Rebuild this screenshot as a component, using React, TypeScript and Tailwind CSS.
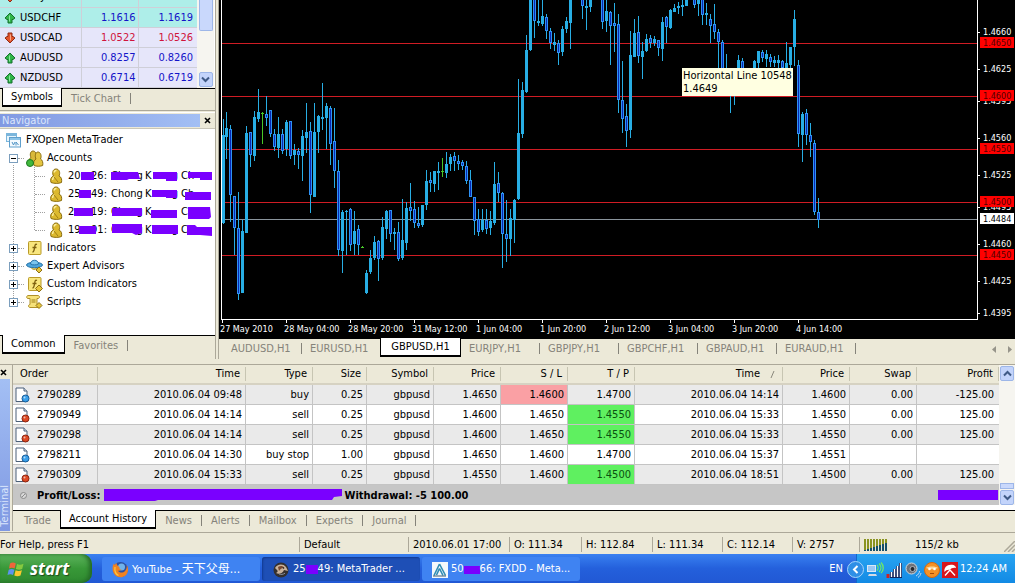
import { Fragment } from "react";
import type { ReactNode } from "react";

type Candle = [number, number, number, number, number, "u" | "d" | "g"];

// x, high, body top, body bottom, low, direction
const candles: Candle[] = [
  [223, 119, 135, 223, 224, "u"], [226, 112, 128, 137, 159, "u"], [230, 125, 129, 195, 222, "d"],
  [234, 196, 196, 228, 255, "d"], [238, 192, 228, 294, 300, "d"], [242, 220, 231, 293, 293, "u"],
  [246, 126, 133, 233, 233, "u"], [250, 132, 132, 155, 167, "d"], [254, 111, 117, 156, 161, "u"],
  [258, 89, 112, 119, 122, "u"], [262, 112, 113, 114, 144, "g"], [266, 96, 114, 118, 126, "d"],
  [270, 110, 110, 134, 137, "d"], [274, 129, 134, 147, 151, "d"], [278, 117, 134, 148, 158, "u"],
  [282, 129, 134, 151, 154, "d"], [286, 120, 122, 149, 156, "u"], [290, 121, 121, 156, 159, "d"],
  [294, 144, 150, 155, 165, "u"], [298, 148, 151, 155, 169, "d"], [302, 130, 136, 156, 181, "u"],
  [306, 103, 132, 138, 153, "u"], [310, 122, 131, 195, 213, "d"], [314, 103, 132, 197, 197, "u"],
  [318, 115, 116, 132, 153, "u"], [322, 83, 117, 119, 130, "u"], [326, 103, 106, 118, 149, "u"],
  [330, 106, 108, 144, 165, "d"], [334, 108, 141, 171, 188, "d"], [338, 160, 171, 250, 256, "d"],
  [342, 210, 212, 251, 273, "u"], [346, 210, 211, 212, 255, "u"], [350, 208, 209, 245, 251, "d"],
  [354, 211, 231, 244, 255, "u"], [358, 225, 229, 245, 255, "d"], [366, 270, 273, 293, 294, "u"],
  [370, 250, 258, 272, 274, "u"], [374, 236, 242, 258, 260, "u"], [378, 240, 241, 259, 281, "d"],
  [382, 217, 227, 258, 260, "u"], [386, 210, 211, 229, 239, "u"], [390, 210, 210, 234, 242, "d"],
  [394, 228, 232, 234, 250, "u"], [398, 222, 232, 259, 261, "d"], [402, 199, 240, 258, 260, "u"],
  [406, 202, 208, 243, 250, "u"], [410, 183, 207, 211, 221, "d"], [414, 201, 209, 223, 228, "d"],
  [418, 207, 223, 226, 228, "d"], [422, 205, 205, 225, 227, "u"], [426, 170, 181, 205, 210, "u"],
  [430, 172, 180, 183, 192, "d"], [434, 171, 171, 184, 192, "u"], [438, 162, 171, 173, 190, "u"],
  [442, 158, 171, 172, 177, "g"], [446, 152, 164, 173, 178, "u"], [450, 154, 157, 164, 171, "u"],
  [454, 152, 156, 161, 171, "d"], [458, 155, 161, 164, 170, "d"], [462, 160, 162, 166, 170, "d"],
  [466, 161, 166, 181, 184, "d"], [470, 170, 180, 197, 197, "d"], [474, 197, 197, 221, 235, "d"],
  [478, 209, 219, 232, 236, "d"], [482, 209, 220, 230, 232, "u"], [486, 209, 220, 229, 234, "d"],
  [490, 211, 221, 228, 235, "u"], [494, 162, 184, 223, 225, "u"], [498, 172, 183, 193, 202, "d"],
  [502, 192, 193, 234, 268, "d"], [506, 200, 234, 239, 262, "d"], [510, 209, 218, 239, 256, "u"],
  [514, 199, 200, 220, 243, "u"], [518, 79, 133, 199, 200, "u"], [522, 82, 90, 134, 138, "u"],
  [526, 35, 50, 92, 93, "u"], [530, -2, -2, 50, 51, "u"], [534, -2, -2, 21, 38, "d"],
  [538, -2, 21, 23, 26, "u"], [542, -2, 16, 24, 26, "u"], [546, 14, 17, 31, 39, "d"],
  [550, 28, 31, 43, 49, "d"], [554, 33, 42, 45, 51, "u"], [558, 40, 43, 53, 65, "d"],
  [562, 26, 29, 52, 56, "u"], [566, 17, 21, 29, 33, "u"], [570, -2, -2, 23, 49, "u"],
  [582, -2, -2, 6, 19, "d"], [586, -2, 6, 8, 30, "u"], [590, -2, -2, 7, 12, "u"],
  [602, -2, -2, 22, 29, "d"], [606, -2, 11, 21, 32, "u"], [610, 11, 12, 26, 65, "d"],
  [614, 3, 23, 26, 52, "d"], [618, 14, 24, 100, 113, "d"], [622, 61, 100, 119, 133, "d"],
  [626, 104, 116, 131, 147, "d"], [630, 31, 55, 130, 138, "u"], [634, 19, 33, 57, 57, "u"],
  [638, 16, 32, 56, 63, "d"], [642, 42, 51, 57, 79, "u"], [646, 34, 39, 51, 52, "u"],
  [650, 35, 38, 43, 48, "d"], [654, 36, 39, 43, 46, "u"], [658, 40, 40, 48, 56, "d"],
  [662, 17, 22, 49, 61, "u"], [666, 16, 17, 27, 43, "d"], [670, 9, 10, 28, 29, "u"],
  [674, 4, 8, 12, 12, "u"], [678, 2, 6, 8, 14, "u"], [682, -2, 5, 7, 16, "u"],
  [686, -2, -2, 6, 6, "u"], [694, -2, -2, 5, 8, "d"], [698, -2, -2, 4, 16, "u"],
  [702, -2, -2, 15, 25, "d"], [706, 3, 13, 15, 25, "u"], [710, 14, 19, 26, 43, "d"],
  [714, 4, 24, 32, 39, "d"], [718, 29, 32, 42, 77, "d"], [722, 40, 42, 80, 90, "d"],
  [726, 54, 80, 90, 95, "d"], [730, 80, 85, 92, 113, "d"], [734, 80, 85, 92, 105, "u"],
  [738, 55, 60, 72, 76, "u"], [742, 58, 61, 72, 76, "d"], [754, 60, 61, 72, 76, "u"],
  [758, 51, 51, 63, 68, "u"], [762, 50, 52, 58, 62, "d"], [766, 50, 54, 59, 67, "u"],
  [770, 54, 57, 62, 67, "d"], [774, 56, 60, 63, 67, "u"], [778, 55, 60, 63, 70, "u"],
  [782, 60, 61, 68, 72, "d"], [786, 42, 63, 70, 74, "u"], [790, 47, 47, 65, 82, "u"],
  [794, 10, 19, 47, 66, "u"], [798, 60, 65, 134, 147, "d"], [802, 112, 114, 135, 162, "u"],
  [806, 109, 113, 135, 145, "d"], [810, 123, 135, 142, 157, "d"], [814, 140, 143, 212, 215, "d"],
  [818, 198, 212, 220, 228, "d"],
];

const levels = [
  { y: 43, price: "1.4650" },
  { y: 96, price: "1.4600" },
  { y: 149, price: "1.4550" },
  { y: 202, price: "1.4500" },
  { y: 255, price: "1.4450" },
];

const scale = [
  { y: 32, price: "1.4660" },
  { y: 69, price: "1.4625" },
  { y: 101, price: "1.4595" },
  { y: 138, price: "1.4560" },
  { y: 175, price: "1.4525" },
  { y: 207, price: "1.4495" },
  { y: 244, price: "1.4460" },
  { y: 281, price: "1.4425" },
  { y: 313, price: "1.4395" },
];

const times = [
  "27 May 2010", "28 May 04:00", "28 May 20:00", "31 May 12:00", "1 Jun 04:00",
  "1 Jun 20:00", "2 Jun 12:00", "3 Jun 04:00", "3 Jun 20:00", "4 Jun 14:00",
];

const quotes = [
  { symbol: "USDJPY", bid: "91.79", ask: "91.83", up: false, hot: true },
  { symbol: "USDCHF", bid: "1.1616", ask: "1.1619", up: true, hot: true },
  { symbol: "USDCAD", bid: "1.0522", ask: "1.0526", up: false, hot: false },
  { symbol: "AUDUSD", bid: "0.8257", ask: "0.8260", up: true, hot: false },
  { symbol: "NZDUSD", bid: "0.6714", ask: "0.6719", up: true, hot: false },
];

const accounts = [
  { head: "20", tail: "26:", rest: "g" },
  { head: "25", tail: "49:", rest: "g" },
  { head: "2", tail: "19:", rest: "" },
  { head: "19", tail: "91:", rest: "g" },
];

const orders = [
  { id: "2790289", open: "2010.06.04 09:48", type: "buy", size: "0.25", price: "1.4650", sl: "1.4600", tp: "1.4700", close: "2010.06.04 14:14", exit: "1.4600", swap: "0.00", profit: "-125.00", hit: "sl" },
  { id: "2790949", open: "2010.06.04 14:14", type: "sell", size: "0.25", price: "1.4600", sl: "1.4650", tp: "1.4550", close: "2010.06.04 15:33", exit: "1.4550", swap: "0.00", profit: "125.00", hit: "tp" },
  { id: "2790298", open: "2010.06.04 14:14", type: "sell", size: "0.25", price: "1.4600", sl: "1.4650", tp: "1.4550", close: "2010.06.04 15:33", exit: "1.4550", swap: "0.00", profit: "125.00", hit: "tp" },
  { id: "2798211", open: "2010.06.04 14:30", type: "buy stop", size: "1.00", price: "1.4650", sl: "1.4600", tp: "1.4700", close: "2010.06.04 15:37", exit: "1.4551", swap: "", profit: "", hit: "" },
  { id: "2790309", open: "2010.06.04 15:33", type: "sell", size: "0.25", price: "1.4550", sl: "1.4600", tp: "1.4500", close: "2010.06.04 18:51", exit: "1.4500", swap: "0.00", profit: "125.00", hit: "tp" },
];

const headings = ["Order", "Time", "Type", "Size", "Symbol", "Price", "S / L", "T / P", "Time", "Price", "Swap", "Profit"];

/* ---------- icons ---------- */

function QuoteArrow({ up }: { up: boolean }) {
  return (
    <svg width="12" height="12" viewBox="0 0 12 12" className={up ? "" : "rotate-180"}>
      <path
        d="M6 1l5 5-2 1.500H8V11H4V7.500H3L1 6z"
        fill={up ? "#2fb54a" : "#e2552c"}
        stroke={up ? "#14702c" : "#8f2a14"}
      />
      <path d="M5.500 3.500v6" stroke={up ? "#8fe8a0" : "#f7a98a"} />
    </svg>
  );
}

function PersonIcon() {
  return (
    <svg width="14" height="16" viewBox="0 0 14 16">
      <path d="M2 14.500c-1-3 0-5.500 2.500-6.500C3 5.500 3.500 1 7 1s4.500 4 3 7c2.500 1 3 3.500 2.500 6.500-3 1.200-7.500 1.200-10.500 0z" fill="#dcb92e" stroke="#8a6d10" />
      <path d="M5 4.500c.3-1.600 1.500-2.200 2.500-2M3.500 12c0-1.600.8-2.600 2-3" stroke="#fbeea0" fill="none" strokeWidth="1.400" />
      <path d="M5 9l4 5" stroke="#a07f12" />
    </svg>
  );
}

function AccountsIcon() {
  return (
    <svg width="18" height="17" viewBox="0 0 18 17">
      <path d="M3 14c-1-3 0-5.500 2-6.500C3.500 4.500 4.500 1 7 1s4 3 3 6l2 7z" fill="#d9b93a" stroke="#8a6d10" />
      <path d="M8 15.500c-1-3 0-5.500 2-6.500-1.500-3-.5-7 2-7s4 4 2.500 7c2 1 2.700 3.500 2.200 6.500-2.500 1-6.200 1-8.700 0z" fill="#e4c540" stroke="#8a6d10" />
      <circle cx="4" cy="13" r="3.500" fill="#41b83c" stroke="#1d7a20" />
    </svg>
  );
}

function PlatformIcon() {
  return (
    <svg width="15" height="15" viewBox="0 0 15 15">
      <rect x=".5" y=".5" width="10" height="8" fill="#e6f4fc" stroke="#7bb6dc" />
      <path d="M1 2h9" stroke="#7bb6dc" strokeWidth="2" />
      <rect x="3.500" y="4.500" width="11" height="9.500" fill="#f4fafe" stroke="#5f9fcc" />
      <path d="M4 6h10" stroke="#8cc4e8" strokeWidth="2" />
      <path d="M6 9l1.500 3L9 9M10 12.500V9l2.500 3" stroke="#4f93c4" fill="none" />
    </svg>
  );
}

function FunctionIcon({ custom = false }: { custom?: boolean }) {
  return (
    <svg width="16" height="15" viewBox="0 0 16 15">
      <rect x="1.500" y=".5" width="12.500" height="13" rx="1" fill="#f8e67e" stroke="#b99a28" />
      <path d="M10 3.500C8 2.500 8 4.500 7.500 7S7 11 5.500 11M5.500 6.500h4" stroke="#7d6010" fill="none" strokeWidth="1.300" />
      {custom && <path d="M12 8l3.500 3.500L12 15l-3.500-3.500z" fill="#e6c63c" stroke="#8f7012" />}
    </svg>
  );
}

function AdvisorIcon() {
  return (
    <svg width="17" height="15" viewBox="0 0 17 15">
      <path d="M4.500 7c.5 4 6 5 7.500 0z" fill="#f1d772" stroke="#b59424" />
      <ellipse cx="8.500" cy="6" rx="8" ry="2.700" fill="#4fa6dc" stroke="#2774aa" />
      <path d="M4.500 5c0-5 8-5 8 0-2 1.200-6 1.200-8 0z" fill="#7cc6ee" stroke="#2774aa" />
      <path d="M13 8l3 3-3 3-3-3z" fill="#e6c63c" stroke="#8f7012" />
    </svg>
  );
}

function ScriptIcon() {
  return (
    <svg width="17" height="16" viewBox="0 0 17 16">
      <path d="M2 1.500h10c2 0 2 3 0 3h-1v6h2v3H4c-2 0-2-3 0-3v-6H2c-2 0-1.500-3 0-3z" fill="#f6e27a" stroke="#b0902a" />
      <path d="M5.500 6h4M5.500 8h4" stroke="#9b7c1a" />
      <path d="M13 8.500l3 3-3 3-3-3z" fill="#e6c63c" stroke="#8f7012" />
    </svg>
  );
}

function OrderIcon({ buy }: { buy: boolean }) {
  return (
    <svg width="15" height="16" viewBox="0 0 15 16" className="shrink-0">
      <path d="M1 1h8l3 3v10.500H1z" fill="#fff" stroke="#4a5f78" />
      <path d="M9 1v3h3" fill="#dfe8f2" stroke="#4a5f78" />
      <circle cx="10.500" cy="11.500" r="3.500" fill={buy ? "#3aa0ea" : "#dd4a24"} stroke={buy ? "#185c98" : "#8a2410"} />
      <circle cx="9.500" cy="10.500" r="1" fill="#fff" opacity=".6" />
    </svg>
  );
}

function Chevron({ up = false }: { up?: boolean }) {
  return (
    <svg width="9" height="7" viewBox="0 0 9 7" className={up ? "rotate-180" : ""}>
      <path d="M1 1.500l3.500 3.500L8 1.500" fill="none" stroke="#3f5a86" strokeWidth="2" />
    </svg>
  );
}

function CloseMark() {
  return (
    <svg width="7" height="7" viewBox="0 0 7 7">
      <path d="M1 1l5 5M6 1L1 6" stroke="#000" strokeWidth="1.600" />
    </svg>
  );
}

function WindowsFlag() {
  return (
    <svg width="18" height="18" viewBox="0 0 18 18">
      <path d="M3 3.500c2-1.300 4-1.200 5.800 0L7.600 8.400c-1.800-1-3.700-1-5.600.1z" fill="#f0653a" />
      <path d="M10 4c2 1 4 1 6.500-.3L15.200 9c-2 1.100-4.200 1-6.300 0z" fill="#86c940" />
      <path d="M1.700 9.800c2-1.200 3.800-1.200 5.700 0L6 15c-1.800-1.100-3.500-1.100-5.500 0z" fill="#5c93ee" />
      <path d="M8.600 10.200c2 1 4 1.100 6.300 0l-1.400 5.200c-2.100 1.100-4.100 1.100-6.200 0z" fill="#fbc92e" />
    </svg>
  );
}

function FirefoxIcon() {
  return (
    <svg width="17" height="17" viewBox="0 0 17 17">
      <circle cx="8.500" cy="8.500" r="7.500" fill="#2c4fa0" />
      <circle cx="9.500" cy="6" r="3.500" fill="#6fb2ea" />
      <path d="M2 2.500C-.5 6 0 13 5 15.500c5 2.200 10.500-.5 11-6 .2-2-.3-4-1.300-5.500.3 3-.4 4.500-1.700 6-2 2.200-6 2-7-.5 1.500.5 3 0 3.500-1-1.800-.2-2.300-1-2-2.200C6 5 4.500 4 4.500 2 3.500 2.500 3 3.500 2.800 4.300z" fill="#f08222" />
      <path d="M3 6c-.5 3.500.5 7 3.500 8.500" stroke="#fbc640" fill="none" strokeWidth="1.300" />
    </svg>
  );
}

function EagleIcon() {
  return (
    <svg width="16" height="16" viewBox="0 0 16 16">
      <circle cx="8" cy="8" r="7.500" fill="#35302e" />
      <path d="M2 6c2-4 8-5 11-1l2 4-4-1c-1 3-5 5-8 3 2-1 2-2 1-3z" fill="#c9b29b" />
      <path d="M5 5c2-1.500 5-1.500 6 .5-2 .5-4 1.500-5 3.500z" fill="#7a4a30" />
      <circle cx="10.500" cy="6" r=".8" fill="#111" />
      <path d="M6 12c2 .8 4 .5 6-.8" stroke="#8a8f9c" fill="none" />
    </svg>
  );
}

function FxddIcon() {
  return (
    <svg width="16" height="16" viewBox="0 0 16 16">
      <rect width="16" height="16" fill="#f4f8fb" />
      <path d="M7.500 2L2 13.500M7.500 2l6 11.500M7.500 6.500L4.500 13M7.500 6.500l3.500 7" stroke="#2f8db4" strokeWidth="1.600" fill="none" />
      <path d="M1 14h13" stroke="#3d5d74" />
    </svg>
  );
}

function TrayIcons() {
  return (
    <>
      <svg width="17" height="17" viewBox="0 0 17 17">
        <circle cx="8.500" cy="8.500" r="8" fill="#2f8fe6" stroke="#a6d4fa" />
        <path d="M10.500 5L7 8.500l3.500 3.500" stroke="#fff" strokeWidth="2" fill="none" />
      </svg>
      <svg width="18" height="16" viewBox="0 0 18 16">
        <rect x="1.500" y="3.500" width="8" height="6" fill="#9cc8f4" stroke="#dbe9f8" />
        <path d="M3 12h7l1 2H2z" fill="#d5dbe6" />
        <path d="M11 3c1.500 1.500 1.500 4 0 5.500M13 1.500c2.500 2.500 2.500 6 0 8.500M15 .5c3 3 3 8 0 10.500" stroke="#6fe868" fill="none" strokeWidth="1.300" />
      </svg>
      <svg width="17" height="16" viewBox="0 0 17 16">
        <path d="M2 12v4" stroke="#c22" strokeWidth="3" />
        <path d="M5.500 10v6M8.500 7v9M11.500 4v12M14.500 1v15" stroke="#10245c" strokeWidth="3" />
        <path d="M5.500 10v5M8.500 7v8M11.500 4v11M14.500 1v14" stroke="#fff" strokeWidth="1.400" />
      </svg>
      <svg width="17" height="16" viewBox="0 0 17 16">
        <circle cx="6.500" cy="6.500" r="5.500" fill="#6d737c" stroke="#d3d8de" />
        <circle cx="7.500" cy="7" r="2.500" fill="#23272e" stroke="#aeb4bc" />
        <path d="M11 14c2-1 3.500-3 3.500-5M13 15.500c1.500-1 2.500-2.500 3-4.500" stroke="#bcd8f6" fill="none" />
      </svg>
      <svg width="16" height="16" viewBox="0 0 16 16">
        <circle cx="8" cy="8" r="7.500" fill="#f59226" stroke="#d9690c" />
        <path d="M2 6c2-2 10-2 12 0-3 1.500-9 1.500-12 0z" fill="#fcd79a" />
        <circle cx="5.500" cy="7" r="1.300" fill="#fff" />
        <circle cx="10.500" cy="7" r="1.300" fill="#fff" />
        <path d="M6 11.500h4" stroke="#a84a08" />
      </svg>
      <svg width="16" height="16" viewBox="0 0 16 16">
        <rect width="16" height="16" fill="#d8151c" />
        <path d="M2.500 10C1.500 5 6 1.500 11.500 3c2 .8 2.500 2 2.500 3-3-.5-5 .5-6 2-2-.5-4 .3-5.500 2z" fill="#fff" />
        <path d="M8 8l5 5.500M3 13.500l5-5.500" stroke="#fff" strokeWidth="1.300" />
      </svg>
    </>
  );
}

/* ---------- shared pieces ---------- */

type TabStripProps = { tabs: string[]; active: string; wide?: boolean; children?: ReactNode };

function TabStrip({ tabs, active, wide = false, children }: TabStripProps) {
  return (
    <div className={"flex h-[21px] items-start border-t border-black bg-[#ece9d8] " + (wide ? "pl-[4px]" : "pl-[2px]")}>
      {tabs.map((tab, i) =>
        tab === active ? (
          <button
            key={tab}
            className={"relative -mt-px h-[19px] shrink-0 border-x border-b-2 border-black bg-white leading-[17px] whitespace-nowrap text-black " + (wide ? "w-[81px]" : "px-[8px]")}
          >
            {tab}
          </button>
        ) : (
          <Fragment key={tab}>
            <button className={"h-[19px] shrink-0 text-left leading-[19px] whitespace-nowrap text-[#85837a] " + (wide ? "w-[78px] pl-[8px]" : "px-[9px]")}>
              {tab}
            </button>
            {tabs[i + 1] !== active && <span className="mt-[4px] h-[11px] w-px bg-[#85837a]" />}
          </Fragment>
        )
      )}
      {children}
    </div>
  );
}

function ScrollButton({ up = false }: { up?: boolean }) {
  return (
    <button aria-label={up ? "Scroll up" : "Scroll down"} className="flex h-[15px] w-[14px] items-center justify-center rounded-[2px] border border-[#9db6e8] bg-[#c3d4fb]">
      <Chevron up={up} />
    </button>
  );
}

function TreeRow({ icon, label }: { icon: ReactNode; label: string }) {
  return (
    <div className="flex h-[18px] items-center">
      <button aria-label={"Expand " + label} className="ml-[9px] flex size-[9px] items-center justify-center border border-[#7b9ebd] bg-white">
        <svg width="5" height="5" viewBox="0 0 5 5">
          <path d={label === "Accounts" ? "M0 2.500h5" : "M0 2.500h5M2.500 0v5"} stroke="#000" />
        </svg>
      </button>
      <span className="w-[6px] border-t border-dotted border-[#a0a0a0]" />
      <span className="flex w-[23px] shrink-0 justify-center pr-[2px]">{icon}</span>
      <span>{label}</span>
    </div>
  );
}

/* ---------- panels ---------- */

function MarketWatch() {
  return (
    <section>
      <div className="flex h-[88px] bg-white pr-px">
        <div className="flex h-full flex-1 flex-col justify-end overflow-hidden">
          <table className="w-full shrink-0 table-fixed border-collapse">
            <colgroup>
              <col className="w-[81px]" />
              <col className="w-[57px]" />
              <col />
            </colgroup>
            <tbody>
              {quotes.map((q) => (
                <tr key={q.symbol} className={"h-[20px] border-b border-[#cfcfd8] leading-[18px] " + (q.hot ? "bg-[#aeeee9]" : "bg-[#e6e6fa]")}>
                  <td className="border-r border-[#cfcfd8]">
                    <span className="flex items-center gap-[4px] pl-[4px]">
                      <QuoteArrow up={q.up} />
                      {q.symbol}
                    </span>
                  </td>
                  <td className={"border-r border-[#cfcfd8] pr-[2px] text-right " + (q.up ? "text-[#1414c8]" : "text-[#d0143c]")}>{q.bid}</td>
                  <td className={"pr-[4px] text-right " + (q.up ? "text-[#1414c8]" : "text-[#d0143c]")}>{q.ask}</td>
                </tr>
              ))}
            </tbody>
          </table>
        </div>
        <div className="flex w-[17px] flex-col items-center justify-between bg-[#f6f5f0] pb-px">
          <div className="h-[31px] w-[14px] rounded-b-[2px] border border-t-0 border-[#9db6e8] bg-[#c9d8fc]" />
          <ScrollButton />
        </div>
      </div>
      <TabStrip tabs={["Symbols", "Tick Chart"]} active="Symbols" />
    </section>
  );
}

function Navigator() {
  return (
    <section className="mt-px border-t border-[#aca899] pt-px">
      <div className="flex h-[16px] items-center border-t border-white">
        <h2 className="h-[13px] flex-1 bg-gradient-to-r from-[#8199e2] to-[#a3bff4] pl-[2px] leading-[13px] text-[#dbe6fc]">Navigator</h2>
        <button aria-label="Close navigator" className="flex w-[15px] justify-center">
          <CloseMark />
        </button>
      </div>
      <div className="relative h-[207px] border-t border-[#c9c6b8] bg-white pt-[2px]">
        <div className="absolute top-[36px] left-[13px] h-[137px] border-l border-dotted border-[#a0a0a0]" />
        <div className="absolute top-[38px] left-[34px] h-[63px] border-l border-dotted border-[#a0a0a0]" />
        <div className="relative">
          <div className="flex h-[18px] items-center gap-[5px] pl-[6px]">
            <PlatformIcon />
            FXOpen MetaTrader
          </div>
          <TreeRow icon={<AccountsIcon />} label="Accounts" />
          {accounts.map((a) => (
            <div key={a.head + a.tail} className="flex h-[18px] items-center overflow-hidden pl-[35px]">
              <span className="w-[10px] border-t border-dotted border-[#a0a0a0]" />
              <span className="flex w-[23px] justify-center pr-[2px]">
                <PersonIcon />
              </span>
              <span className="flex w-[39px] justify-between">
                <span>{a.head}</span>
                <span>{a.tail}</span>
              </span>
              <span className="ml-[4px] w-[34px]">Chong</span>
              <span className="flex w-[33px] justify-between">
                <span>K</span>
                <span>{a.rest}</span>
              </span>
              <span className="ml-[3px]">Ch</span>
            </div>
          ))}
          <TreeRow icon={<FunctionIcon />} label="Indicators" />
          <TreeRow icon={<AdvisorIcon />} label="Expert Advisors" />
          <TreeRow icon={<FunctionIcon custom />} label="Custom Indicators" />
          <TreeRow icon={<ScriptIcon />} label="Scripts" />
          {/* marker strokes over the account holders */}
          <svg width="145" height="72" viewBox="0 0 145 72" className="absolute top-[36px] left-[68px]" fill="#7a00ff">
            <path d="M13 5h13v8H13zM43 5h27l2 7H61l-2 1H43zM85 5h24v9H98v-2H85zM120 5h24v8h-12v-2h-12z" />
            <path d="M11 23h12v8H11zM84 23h25v8H98v-1H84zM117 25h26v8h-26z" />
            <path d="M6 41h19v8H6zM44 41h30v8H44zM83 43h26v8H83zM120 40h22l1 10-2 2h-21z" />
            <path d="M11 59h17v8H11zM44 57h30v9l-6 2-4-2H44zM84 58h26v9H84zM119 58h8l2 2h15v9l-12-1h-13z" />
          </svg>
        </div>
      </div>
      <TabStrip tabs={["Common", "Favorites"]} active="Common" />
    </section>
  );
}

function PriceChart() {
  return (
    <div className="relative flex h-[338px] bg-black">
      <svg height="338" className="min-w-0 flex-1" shapeRendering="crispEdges">
        {levels.map((l) => (
          <rect key={l.y} x="3" y={l.y} width="100%" height="1" fill="#d01c24" />
        ))}
        <rect x="3" y="219" width="100%" height="1" fill="#8a949c" />
        <g transform="translate(-219 0)">
          {candles.map(([x, high, top, bottom, low, kind]) => (
            <g key={x} fill={kind === "g" ? "#48c828" : "#28aee4"}>
              <rect x={x} y={high} width="1" height={low - high} />
              {kind === "d" ? (
                <rect x={x - 0.5} y={top + 0.5} width="2" height={Math.max(2, bottom - top - 1)} fill="#0828b4" stroke="#2f92f4" />
              ) : (
                <rect x={x - 1} y={top} width="3" height={bottom - top} />
              )}
            </g>
          ))}
          <path d="M361 248h3v-1h-1v-1h-1v1h-1z" fill="#48c828" />
        </g>
        <rect x="2" y="0" width="1" height="320" fill="#fff" />
        <rect x="2" y="319" width="100%" height="1" fill="#fff" />
        {times.map((t, i) => (
          <Fragment key={t}>
            <rect x={3 + i * 64} y="320" width="1" height="3" fill="#fff" />
            <text x={1 + i * 64} y="332" fill="#fff" className="text-[9px]">
              {t}
            </text>
          </Fragment>
        ))}
      </svg>
      <svg width="38" height="338" className="shrink-0" shapeRendering="crispEdges">
        <rect x="0" y="0" width="1" height="320" fill="#fff" />
        {scale.map((s) => (
          <Fragment key={s.y}>
            <rect x="1" y={s.y} width="2" height="1" fill="#fff" />
            <text x="6" y={s.y + 3} fill="#fff" className="text-[9px]">
              {s.price}
            </text>
          </Fragment>
        ))}
        {levels.map((l) => (
          <Fragment key={l.y}>
            <rect x="3" y={l.y - 6} width="34" height="11" fill="#ff0000" />
            <text x="6" y={l.y + 3} fill="#500000" className="text-[9px]">
              {l.price}
            </text>
          </Fragment>
        ))}
        <rect x="3" y="213" width="34" height="11" fill="#fff" />
        <text x="6" y="222" fill="#000" className="text-[9px]">
          1.4484
        </text>
      </svg>
      <div role="tooltip" className="absolute top-[68px] left-[463px] bg-[#ffffe1] px-px py-px leading-[13px] whitespace-nowrap">
        Horizontal Line 10548
        <br />
        1.4649
      </div>
    </div>
  );
}

function ChartTabs() {
  const tabs = ["AUDUSD,H1", "EURUSD,H1", "GBPUSD,H1", "EURJPY,H1", "GBPJPY,H1", "GBPCHF,H1", "GBPAUD,H1", "EURAUD,H1"];
  return (
    <TabStrip tabs={tabs} active="GBPUSD,H1" wide>
      <span className="ml-auto flex gap-[12px] pt-[7px] pr-[3px]">
        <button aria-label="Previous tabs">
          <svg width="4" height="7" viewBox="0 0 4 7" className="block"><path d="M4 0v7L0 3.500z" fill="#96948a" /></svg>
        </button>
        <button aria-label="Next tabs">
          <svg width="4" height="7" viewBox="0 0 4 7" className="block"><path d="M0 0v7l4-3.500z" fill="#96948a" /></svg>
        </button>
      </span>
    </TabStrip>
  );
}

function Terminal() {
  const cell = "border-r border-b border-[#c4c4c4] pr-[3px] text-right whitespace-nowrap";
  return (
    <section className="mt-[5px] flex border-t border-[#aca899]">
      <div className="flex w-[12px] flex-col items-start">
        <button aria-label="Close terminal" className="flex h-[14px] items-center">
          <CloseMark />
        </button>
        <div className="flex w-[10px] flex-1 items-end bg-gradient-to-b from-[#a3bff4] to-[#7f98e2] pb-[4px]">
          <span className="rotate-180 leading-[10px] text-[#dbe6fc] [writing-mode:vertical-rl]">Terminal</span>
        </div>
      </div>
      <div className="min-w-0 flex-1 border-l border-[#aca899]">
        <div className="flex bg-white">
          <table className="flex-1 table-fixed border-separate border-spacing-0">
            <colgroup>
              <col className="w-[85px]" />
              <col className="w-[148px]" />
              <col className="w-[67px]" />
              <col className="w-[54px]" />
              <col className="w-[67px]" />
              <col className="w-[67px]" />
              <col className="w-[67px]" />
              <col className="w-[67px]" />
              <col className="w-[148px]" />
              <col className="w-[67px]" />
              <col className="w-[67px]" />
              <col />
            </colgroup>
            <thead>
              <tr className="h-[20px] bg-[#ece9d8]">
                {headings.map((h, i) => (
                  <th key={i} className={"border-b-2 border-[#d6d2c2] p-0 font-normal " + (i === 0 ? "text-left" : "text-right")}>
                    <span className={"flex h-[14px] items-center border-r border-[#c7c5b2] leading-[14px] " + (i === 0 ? "pl-[7px]" : "justify-end pr-[5px]")}>
                      {h}
                      {i === 8 && (
                        <svg width="17" height="9" viewBox="0 0 17 9">
                          <path d="M11 8l3-7" stroke="#8a887c" />
                        </svg>
                      )}
                    </span>
                  </th>
                ))}
              </tr>
            </thead>
            <tbody>
              {orders.map((o, i) => (
                <tr key={o.id} className={"h-[20px] leading-[19px] " + (i % 2 === 0 ? "bg-[#eaeaea]" : "bg-white")}>
                  <td className="border-r border-b border-[#c4c4c4]">
                    <span className="flex items-center gap-[7px] pl-[2px]">
                      <OrderIcon buy={o.type.startsWith("buy")} />
                      {o.id}
                    </span>
                  </td>
                  <td className={cell}>{o.open}</td>
                  <td className={cell}>{o.type}</td>
                  <td className={cell}>{o.size}</td>
                  <td className={cell}>gbpusd</td>
                  <td className={cell}>{o.price}</td>
                  <td className={cell + (o.hit === "sl" ? " bg-[#faa0a4]" : "")}>{o.sl}</td>
                  <td className={cell + (o.hit === "tp" ? " bg-[#5ff060] text-[#0a5010]" : "")}>{o.tp}</td>
                  <td className={cell}>{o.close}</td>
                  <td className={cell}>{o.exit}</td>
                  <td className={cell}>{o.swap}</td>
                  <td className="border-b border-[#c4c4c4] pr-[5px] text-right">{o.profit}</td>
                </tr>
              ))}
              <tr className="h-[20px] bg-[#c6c6c6] leading-[19px] font-bold">
                <td colSpan={12}>
                  <span className="flex items-center pr-px">
                    <svg width="24" height="9" viewBox="0 0 24 9" className="shrink-0">
                      <circle cx="10.500" cy="4.500" r="3" fill="#d8d8d8" stroke="#8a8a8a" />
                      <path d="M9 6l3-3" stroke="#8a8a8a" />
                    </svg>
                    Profit/Loss:
                    <svg width="238" height="12" viewBox="0 0 238 12" className="mr-[2px] ml-[4px]">
                      <path d="M0 0h238v7l-8 1-2 3H54l-3 1H0z" fill="#7a00ff" />
                    </svg>
                    Withdrawal: -5 100.00
                    <span className="ml-auto h-[10px] w-[60px] bg-[#7a00ff]" />
                  </span>
                </td>
              </tr>
            </tbody>
          </table>
          <div className="flex w-[16px] flex-col items-center bg-[#f6f5f0] pt-px">
            <ScrollButton up />
            <div className="mt-auto mb-px h-[6px] w-[14px] border border-[#9db6e8] bg-[#c9d8fc]" />
            <ScrollButton />
          </div>
        </div>
        <div className="h-[5px] bg-white" />
        <TabStrip tabs={["Trade", "Account History", "News", "Alerts", "Mailbox", "Experts", "Journal"]} active="Account History" />
      </div>
    </section>
  );
}

function StatusBar() {
  const cell = "shrink-0 border-l border-[#aca899] pl-[4px] leading-[15px] whitespace-nowrap";
  return (
    <footer className="mt-px flex h-[22px] items-center border-t border-[#aca899] pt-[2px] leading-[15px]">
      <span className="w-[299px] shrink-0">For Help, press F1</span>
      <span className={cell + " w-[109px]"}>Default</span>
      <span className={cell + " w-[101px]"}>2010.06.01 17:00</span>
      <span className={cell + " w-[72px]"}>O: 111.34</span>
      <span className={cell + " w-[71px]"}>H: 112.84</span>
      <span className={cell + " w-[70px]"}>L: 111.34</span>
      <span className={cell + " w-[70px]"}>C: 112.14</span>
      <span className={cell + " w-[67px]"}>V: 2757</span>
      <span className={cell + " flex flex-1 items-center gap-[27px]"}>
        <svg width="24" height="12" viewBox="0 0 24 12" shapeRendering="crispEdges">
          {[0, 1, 2, 3, 4, 5, 6, 7].map((i) => (
            <Fragment key={i}>
              <rect x={i * 3} y="0" width="2" height={12 - i} fill="#8a9420" />
              <rect x={i * 3} y={11 - i} width="2" height={1 + i} fill="#14506a" />
            </Fragment>
          ))}
        </svg>
        115/2 kb
        <svg width="11" height="11" viewBox="0 0 11 11" className="mt-auto ml-auto">
          <path d="M0 11L11 0M4 11l7-7M8 11l3-3" stroke="#aca899" strokeWidth="1.500" />
        </svg>
      </span>
    </footer>
  );
}

function Taskbar() {
  const task = "flex h-[24px] w-[158px] shrink-0 items-center rounded-[3px] pt-[2px] whitespace-nowrap text-white ";
  return (
    <nav className="flex h-[29px] items-center bg-gradient-to-b from-[#3a80f0] via-[#2460dc] to-[#2158d4]">
      <button className="flex h-full w-[92px] shrink-0 items-center gap-[5px] rounded-r-[10px] bg-gradient-to-b from-[#5cb45c] via-[#389838] to-[#2f8a30] pl-[7px] shadow-[inset_-3px_0_4px_#246a26]">
        <WindowsFlag />
        <span className="font-['Open_Sans',sans-serif] text-[17px] leading-[20px] font-bold text-white italic [text-shadow:1px_1px_1px_#1c4a1c]">start</span>
      </button>
      <div className="flex flex-1 gap-[2px] pl-[10px]">
        <button className={task + "gap-[3px] bg-[#3f83f2] pl-[10px]"}>
          <FirefoxIcon />
          <span>
            YouTube - <span className="text-[12px]">天下父母...</span>
          </span>
        </button>
        <button className={task + "gap-[4px] bg-[#1e4fb6] pl-[11px] shadow-[inset_1px_1px_2px_#123a90]"}>
          <EagleIcon />
          <span className="flex items-center">
            25
            <span className="h-[9px] w-[12px] bg-[#7a00ff]" />
            49: MetaTrader ...
          </span>
        </button>
        <button className={task + "gap-[3px] bg-[#3f83f2] pl-[10px]"}>
          <FxddIcon />
          <span className="flex items-center">
            50
            <span className="h-[8px] w-[16px] bg-[#7a00ff]" />
            66: FXDD - Meta...
          </span>
        </button>
      </div>
      <span className="pt-[2px] pr-[4px] text-white">EN</span>
      <div className="relative flex h-full w-[168px] shrink-0 items-center gap-[2px] pt-[2px] text-white">
        <div className="absolute inset-y-0 right-0 left-[9px] border-l border-[#1268c8] bg-gradient-to-b from-[#28a4f2] to-[#128ae4]" />
        <div className="relative flex items-center gap-[2px]">
          <TrayIcons />
        </div>
        <span className="relative ml-auto pr-[9px] whitespace-nowrap">12:24 AM</span>
      </div>
    </nav>
  );
}

export default function App() {
  return (
    <div className="flex min-h-screen flex-col overflow-hidden bg-[#ece9d8] font-['DejaVu_Sans_Condensed','Noto_Sans','Noto_Sans_CJK_SC',sans-serif] text-[11px] text-black">
      <div className="flex">
        <aside className="w-[215px] shrink-0">
          <MarketWatch />
          <Navigator />
        </aside>
        <div className="w-[4px] shrink-0 border-r border-l border-[#aca899]" />
        <main className="min-w-0 flex-1">
          <PriceChart />
          <ChartTabs />
        </main>
      </div>
      <Terminal />
      <StatusBar />
      <Taskbar />
    </div>
  );
}
